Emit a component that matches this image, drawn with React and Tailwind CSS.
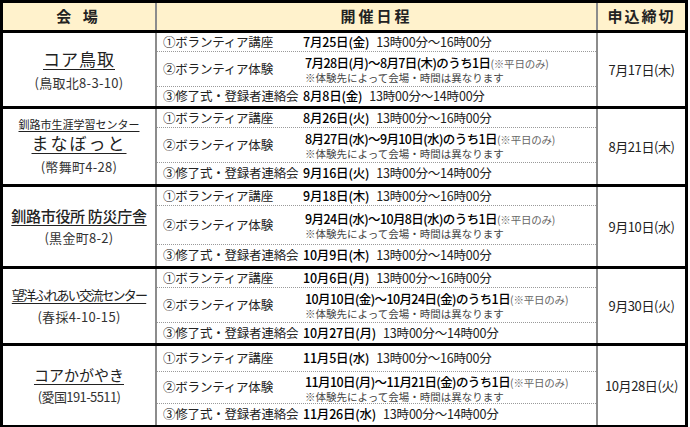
const groups = [
  {
    venue: [{ text: 'コア鳥取', cls: 'text-[17px] tracking-[1px] underline underline-offset-[3px]' }],
    addr: '(鳥取北8-3-10)',
    addrCls: 'tracking-[0.3px]',
    h: [19, 35, 19],
    d1: '7月25日(金)',
    range: '7月28日(月)～8月7日(木)のうち1日',
    d3: '8月8日(金)',
    deadline: '7月17日(木)',
  },
  {
    venue: [
      { text: '釧路市生涯学習センター', cls: 'text-[11px] underline underline-offset-2 leading-[15px]' },
      { text: 'まなぼっと', cls: 'text-[17px] tracking-[2px] underline underline-offset-[3px] leading-[22px]' },
    ],
    addr: '(幣舞町4-28)',
    addrCls: 'tracking-[0.3px]',
    h: [19, 35, 21],
    d1: '8月26日(火)',
    range: '8月27日(水)～9月10日(水)のうち1日',
    d3: '9月16日(火)',
    deadline: '8月21日(木)',
  },
  {
    venue: [{ text: '釧路市役所 防災庁舎', cls: 'text-[15px] font-medium tracking-[-0.3px] underline underline-offset-[3px]' }],
    addr: '(黒金町8-2)',
    addrCls: 'tracking-[0.3px]',
    h: [19, 39, 21],
    d1: '9月18日(木)',
    range: '9月24日(水)～10月8日(水)のうち1日',
    d3: '10月9日(木)',
    deadline: '9月10日(水)',
  },
  {
    venue: [{ text: '望洋ふれあい交流センター', cls: 'text-[13px] tracking-[-1.8px] underline underline-offset-[3px]' }],
    addr: '(春採4-10-15)',
    addrCls: 'tracking-[0.3px]',
    h: [19, 35, 20],
    d1: '10月6日(月)',
    range: '10月10日(金)～10月24日(金)のうち1日',
    d3: '10月27日(月)',
    deadline: '9月30日(火)',
  },
  {
    venue: [{ text: 'コアかがやき', cls: 'text-[15px] underline underline-offset-[3px]' }],
    addr: '(愛国191-5511)',
    addrCls: 'tracking-[-0.6px]',
    h: [26, 32, 21],
    d1: '11月5日(水)',
    range: '11月10日(月)～11月21日(金)のうち1日',
    d3: '11月26日(水)',
    deadline: '10月28日(火)',
  },
];

function Label({ children }) {
  return <div className="w-[146px] shrink-0 pl-[6px] text-[12.5px] tracking-[-0.2px]">{children}</div>;
}

function Group({ g }) {
  return (
    <div className="flex border-t-[3px] border-black">
      <div className="w-[154px] shrink-0 border-r-2 border-[#8c8c8c] flex flex-col items-center justify-center leading-tight">
        {g.venue.map((v) => (
          <div key={v.text} className={`whitespace-nowrap ${v.cls}`}>{v.text}</div>
        ))}
        <div className={`text-[13px] text-[#333] mt-[5px] ${g.addrCls}`}>{g.addr}</div>
      </div>
      <div className="flex-1 flex flex-col">
        <div className="flex items-center border-b border-dotted border-[#9a9a9a]" style={{ height: g.h[0] }}>
          <Label>①ボランティア講座</Label>
          <span className="text-[12.5px] font-medium text-black tracking-[-0.2px]">{g.d1}</span>
          <span className="text-[12.5px] ml-[7px] tracking-[-0.2px]">13時00分～16時00分</span>
        </div>
        <div className="flex items-center border-b border-dotted border-[#9a9a9a]" style={{ height: g.h[1] }}>
          <Label>②ボランティア体験</Label>
          <div className="flex flex-col pl-[2px]">
            <div className="whitespace-nowrap leading-[15px]">
              <span className="text-[12.5px] font-medium text-black tracking-[-0.6px]">{g.range}</span>
              <span className="text-[10.5px] text-[#666] tracking-[-0.2px]">(※平日のみ)</span>
            </div>
            <div className="text-[10.5px] leading-[13px] text-[#444]">※体験先によって会場・時間は異なります</div>
          </div>
        </div>
        <div className="flex items-center" style={{ height: g.h[2] }}>
          <Label>③修了式・登録者連絡会</Label>
          <span className="text-[12.5px] font-medium text-black tracking-[-0.2px]">{g.d3}</span>
          <span className="text-[12.5px] ml-[7px] tracking-[-0.2px]">13時00分～14時00分</span>
        </div>
      </div>
      <div className="w-[89px] shrink-0 border-l-2 border-[#8c8c8c] flex items-center justify-center text-[13px] tracking-[-0.4px]">
        {g.deadline}
      </div>
    </div>
  );
}

export default function App() {
  return (
    <div
      className="w-[690px] h-[427px] bg-white text-[#222] overflow-hidden"
      style={{ fontFamily: '"Noto Sans CJK JP", "Noto Sans", sans-serif' }}
    >
      <div className="w-[688px] border-[3px] border-black">
        <div className="flex h-[27px] bg-[#fff2cc] text-[15px] font-bold">
          <div className="w-[154px] shrink-0 border-r-2 border-[#8c8c8c] flex items-center justify-center tracking-[4px]">
            会 場
          </div>
          <div className="flex-1 flex items-center justify-center tracking-[3px]">開催日程</div>
          <div className="w-[89px] shrink-0 border-l-2 border-[#8c8c8c] flex items-center justify-center tracking-[2px]">
            申込締切
          </div>
        </div>
        {groups.map((g) => (
          <Group key={g.deadline} g={g} />
        ))}
      </div>
    </div>
  );
}
